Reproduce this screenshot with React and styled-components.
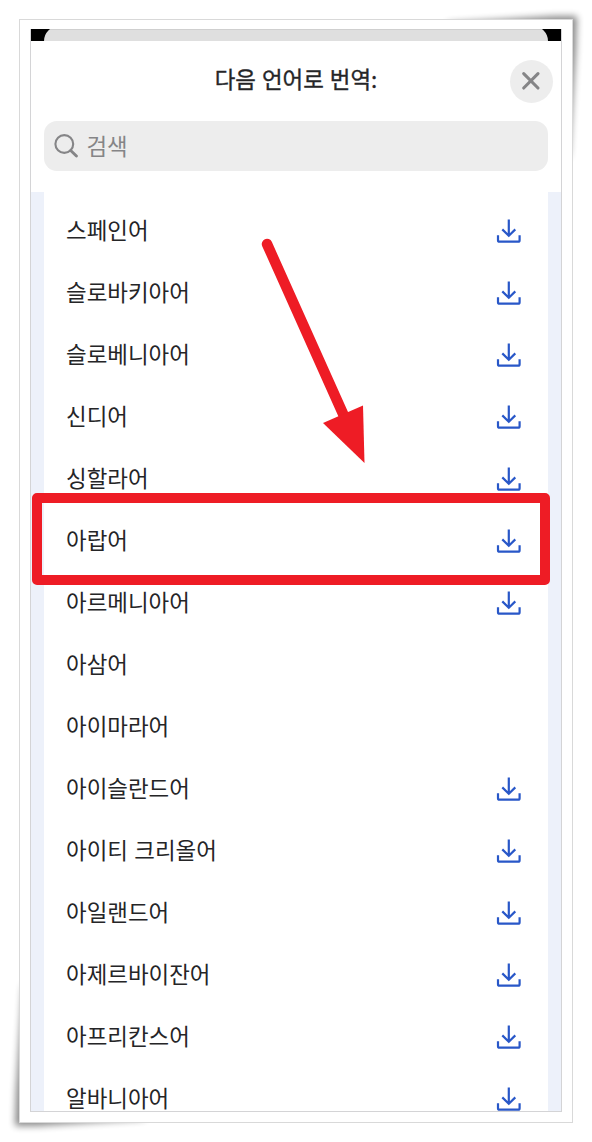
import React from "react";
import styled, { createGlobalStyle } from "styled-components";

const GlobalStyle = createGlobalStyle`
  * { box-sizing: border-box; }
  body {
    margin: 0;
    background: #fff;
    overflow: hidden;
    font-family: "Noto Sans CJK KR", "Noto Sans", sans-serif;
  }
`;

const Stage = styled.main`
  position: relative;
  width: 592px;
  height: 1142px;
  padding: 19px;
  overflow: hidden;
`;

const Curls = styled.svg`
  position: absolute;
  inset: 0;
`;

const Paper = styled.div`
  position: relative;
  width: 554px;
  height: 1104px;
  padding: 9px 10px 10px;
  border: 1px solid #d9d9d9;
  background: #fff;
`;

const Screen = styled.section`
  display: flex;
  flex-direction: column;
  width: 532px;
  height: 1083px;
  border: 1px solid #d4d4d6;
  border-top: 0;
  overflow: hidden;
`;

const StatusStrip = styled.div`
  flex: none;
  height: 12px;
  margin: 0 -1px;
  padding: 0 14px;
  background: linear-gradient(90deg, #000 20px, #dfdfdf 20px calc(100% - 20px), #000 calc(100% - 20px));
  overflow: hidden;
`;

const BackCard = styled.div`
  height: 28px;
  margin-top: -3px;
  border-radius: 15px 15px 0 0;
  background: linear-gradient(#cfcfcf 4px, #dfdfdf 4px);
`;

const Header = styled.header`
  flex: none;
  display: grid;
  grid-template-columns: 42px 1fr 42px;
  align-items: center;
  height: 80px;
  padding: 0 9px;
`;

const Title = styled.h1`
  grid-column: 2;
  margin: 0;
  padding-bottom: 7px;
  text-align: center;
  font-size: 22.4px;
  line-height: 32px;
  font-weight: 400;
  -webkit-text-stroke: 0.35px #252527;
  word-spacing: 1px;
  color: #252527;
`;

const CloseButton = styled.button`
  display: grid;
  place-items: center;
  width: 43px;
  height: 43px;
  margin-left: -0.5px;
  padding: 0;
  border: 0;
  border-radius: 50%;
  background: #ededed;
  color: #858587;
`;

const SearchField = styled.label`
  flex: none;
  display: flex;
  align-items: center;
  gap: 8.5px;
  height: 50px;
  margin: 0 13px 21px;
  padding-left: 10px;
  border-radius: 13px;
  background: #ededed;
  color: #858587;
  font-size: 22.4px;
  line-height: 32px;
`;

const Placeholder = styled.span`
  padding-bottom: 3px;
`;

const ListArea = styled.div`
  flex: 1;
  min-height: 0;
  padding: 0 13px;
  background: #edf1fa;
`;

const List = styled.ul`
  margin: 0;
  padding: 8px 26px 0 22px;
  list-style: none;
  background: #fff;
`;

const Row = styled.li`
  display: flex;
  align-items: center;
  justify-content: space-between;
  height: 62px;
  color: #252527;
`;

const Language = styled.span`
  padding-bottom: 4px;
  font-size: 22.45px;
  line-height: 32px;
  word-spacing: 1.3px;
  white-space: nowrap;
`;

const Highlight = styled.div`
  position: absolute;
  left: 32px;
  top: 493px;
  width: 518px;
  height: 92px;
  border: 10px solid #ee1c25;
  border-radius: 5px;
`;

const Arrow = styled.svg`
  position: absolute;
  left: 250px;
  top: 230px;
`;

const languages = [
  ["스페인어", true],
  ["슬로바키아어", true],
  ["슬로베니아어", true],
  ["신디어", true],
  ["싱할라어", true],
  ["아랍어", true],
  ["아르메니아어", true],
  ["아삼어", false],
  ["아이마라어", false],
  ["아이슬란드어", true],
  ["아이티 크리올어", true],
  ["아일랜드어", true],
  ["아제르바이잔어", true],
  ["아프리칸스어", true],
  ["알바니아어", true],
];

const DownloadIcon = () => (
  <svg width="26" height="26" viewBox="0 0 26 26" fill="none" stroke="#2857c8" strokeWidth="2.2">
    <path d="M12.8 1.5V18M6.3 11.4L12.8 17.7L19.3 11.4" />
    <path d="M2 17.2V22.2Q2 23.7 3.5 23.7H22.1Q23.6 23.7 23.6 22.2V17.2" />
  </svg>
);

const SearchIcon = () => (
  <svg width="24" height="24" viewBox="0 0 24 24" fill="none" stroke="currentColor">
    <circle cx="10.3" cy="10" r="8.9" strokeWidth="2.1" />
    <path d="M16.7 16.5L22.4 22" strokeWidth="2.9" strokeLinecap="round" />
  </svg>
);

const CloseIcon = () => (
  <svg width="20" height="20" viewBox="0 0 20 20" fill="none" stroke="currentColor" strokeWidth="3.1" strokeLinecap="round">
    <path d="M2.7 2.7L17 17M17 2.7L2.7 17" />
  </svg>
);

export default function App() {
  return (
    <>
      <GlobalStyle />
      <Stage>
        <Curls width="592" height="1142">
          <defs>
            <filter id="soft" x="-20%" y="-20%" width="140%" height="140%">
              <feGaussianBlur stdDeviation="3.6" />
            </filter>
          </defs>
          <g fill="#000" opacity="0.46" filter="url(#soft)">
            <path d="M445 23L555 16L577 16L576 50L569 160L540 60Z" />
            <path d="M147 1119L37 1126L15 1126L16 1092L23 982L52 1082Z" />
          </g>
        </Curls>
        <Paper>
          <Screen>
            <StatusStrip>
              <BackCard />
            </StatusStrip>
            <Header>
              <Title>다음 언어로 번역:</Title>
              <CloseButton aria-label="닫기">
                <CloseIcon />
              </CloseButton>
            </Header>
            <SearchField>
              <SearchIcon />
              <Placeholder>검색</Placeholder>
            </SearchField>
            <ListArea>
              <List>
                {languages.map(([name, downloadable]) => (
                  <Row key={name}>
                    <Language>{name}</Language>
                    {downloadable && <DownloadIcon />}
                  </Row>
                ))}
              </List>
            </ListArea>
          </Screen>
        </Paper>
        <Highlight />
        <Arrow width="130" height="240">
          <path d="M17 14L94 186" stroke="#ee1c25" strokeWidth="10.5" strokeLinecap="round" />
          <path d="M73 193L113 175.5L114.5 233Z" fill="#ee1c25" />
        </Arrow>
      </Stage>
    </>
  );
}
